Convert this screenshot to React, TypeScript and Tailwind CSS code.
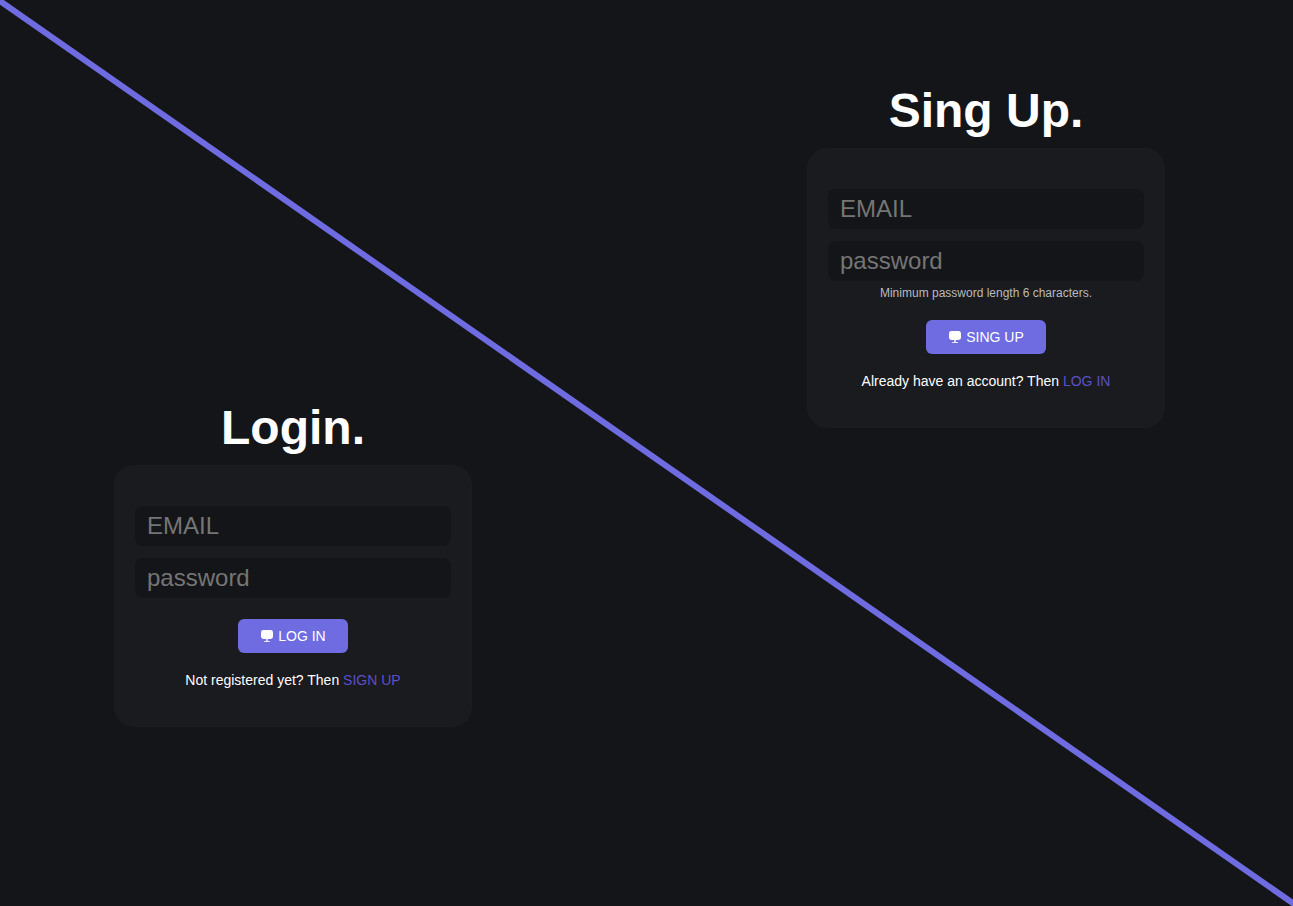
import type { ReactNode } from "react";

function DisplayIcon() {
  return (
    <svg width="14" height="14" viewBox="0 0 14 14" fill="currentColor" aria-hidden="true">
      <rect x="1" y="1" width="12" height="9" rx="2.4" />
      <rect x="6" y="10" width="2" height="2" opacity="0.7" />
      <rect x="4" y="12" width="6" height="1" rx="0.5" opacity="0.85" />
    </svg>
  );
}

function Field({ id, type, placeholder }: { id: string; type: string; placeholder: string }) {
  return (
    <input
      id={id}
      type={type}
      aria-label={placeholder}
      placeholder={placeholder}
      className="h-10 w-full rounded-lg bg-[#141518] px-3 text-2xl text-white outline-none placeholder:text-[#757575]"
    />
  );
}

type AuthPanelProps = {
  id: string;
  title: string;
  action: string;
  question: string;
  link: string;
  target: string;
  hint?: ReactNode;
};

function AuthPanel({ id, title, action, question, link, target, hint }: AuthPanelProps) {
  return (
    <section id={id} className="flex w-full max-w-[358px] flex-col items-center">
      <h1 className="mb-2 text-5xl leading-[58px] font-bold text-white">{title}</h1>
      <form
        onSubmit={(event) => event.preventDefault()}
        className="flex w-full flex-col items-center rounded-[20px] border border-[#1b1c20] bg-[#1a1b1e] px-5 pt-10 pb-[39px]"
      >
        <div className="flex w-full flex-col gap-3 pb-px">
          <Field id={`${id}-email`} type="email" placeholder="EMAIL" />
          <Field id={`${id}-password`} type="password" placeholder="password" />
        </div>
        {hint}
        <button
          type="submit"
          className="mt-5 flex h-[34px] items-center gap-1 rounded-md bg-[#6e6ce0] px-[22px] text-sm text-white"
        >
          <DisplayIcon />
          {action}
        </button>
        <p className="mt-5 text-sm leading-[14px] text-white">
          {question}{" "}
          <a href={target} className="text-[#5a50c8]">
            {link}
          </a>
        </p>
      </form>
    </section>
  );
}

export default function App() {
  return (
    <main className="relative min-h-screen overflow-hidden bg-[#141518] font-['Liberation_Sans',Arial,sans-serif]">
      <svg className="absolute inset-0 h-full w-full" aria-hidden="true">
        <line x1="0" y1="1" x2="100%" y2="99.7%" stroke="#6e6ce0" strokeWidth="6" strokeLinecap="square" />
      </svg>
      <div className="relative flex items-start justify-between gap-8 pt-[82px] pr-32 pl-[114px]">
        <div className="flex flex-1 pt-[317px]">
          <AuthPanel
            id="login"
            title="Login."
            action="LOG IN"
            question="Not registered yet? Then"
            link="SIGN UP"
            target="#signup"
          />
        </div>
        <div className="flex flex-1 justify-end">
          <AuthPanel
            id="signup"
            title="Sing Up."
            action="SING UP"
            question="Already have an account? Then"
            link="LOG IN"
            target="#login"
            hint={<p className="mt-1 text-xs leading-[14px] text-[#b9babd]">Minimum password length 6 characters.</p>}
          />
        </div>
      </div>
    </main>
  );
}
